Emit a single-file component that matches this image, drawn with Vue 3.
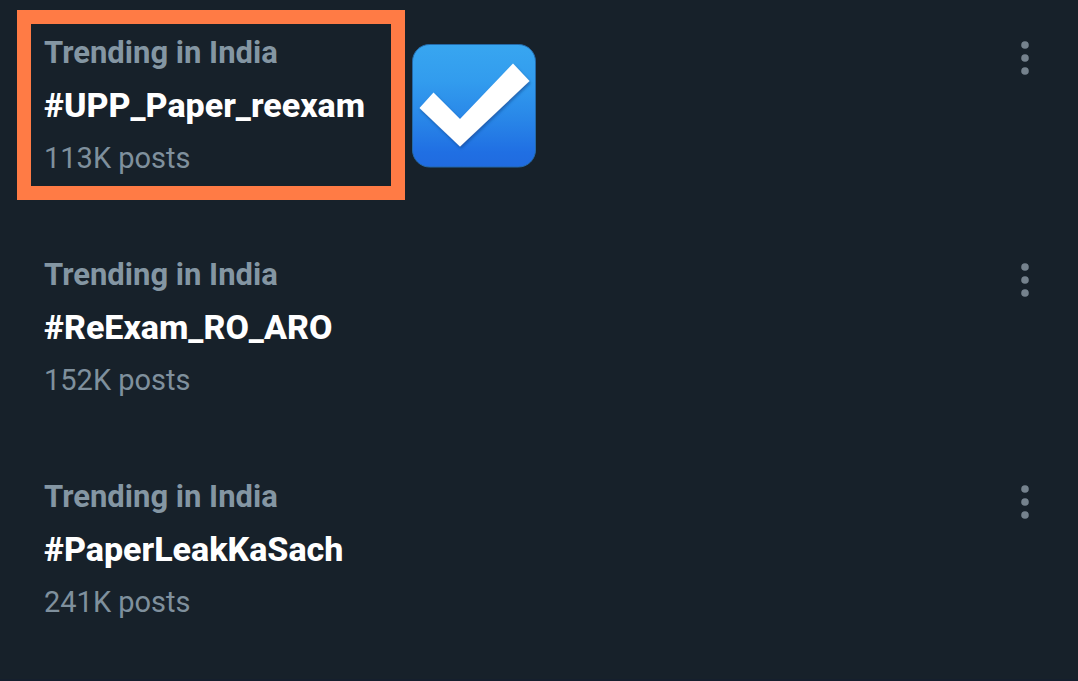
<script setup>
const trends = [
  { tag: '#UPP_Paper_reexam', posts: '113K posts', marked: true },
  { tag: '#ReExam_RO_ARO', posts: '152K posts', marked: false },
  { tag: '#PaperLeakKaSach', posts: '241K posts', marked: false },
]
</script>

<template>
  <main class="page">
    <ul class="trends">
      <li v-for="trend in trends" :key="trend.tag" class="trend">
        <div class="info">
          <span class="context">Trending in India</span>
          <a class="tag" href="#">{{ trend.tag }}</a>
          <span class="posts">{{ trend.posts }}</span>
        </div>
        <button class="more" type="button" :aria-label="'More options for ' + trend.tag">
          <svg width="10" height="34" viewBox="0 0 10 34" fill="#75828d" aria-hidden="true">
            <circle cx="5" cy="4" r="3.8" />
            <circle cx="5" cy="17" r="3.8" />
            <circle cx="5" cy="30" r="3.8" />
          </svg>
        </button>
        <div v-if="trend.marked" class="frame"></div>
        <svg v-if="trend.marked" class="check" viewBox="0 0 124 124" role="img" aria-label="Checked">
          <defs>
            <linearGradient id="tile" x1="0" y1="0" x2="0" y2="1">
              <stop offset="0" stop-color="#38a6f0" />
              <stop offset="0.3" stop-color="#329cee" />
              <stop offset="0.6" stop-color="#2987e8" />
              <stop offset="0.88" stop-color="#206fe3" />
              <stop offset="1" stop-color="#206be0" />
            </linearGradient>
            <filter id="shade" x="-10%" y="-10%" width="120%" height="130%">
              <feDropShadow dx="1" dy="2" stdDeviation="1.5" flood-color="#0c3f86" flood-opacity="0.6" />
            </filter>
          </defs>
          <rect x="0.5" y="0.5" width="123" height="122.5" rx="17" fill="url(#tile)" stroke="#2469a8" />
          <path
            d="M7.5 64 L21.5 48.5 L48 75 L101 19.5 L117.5 37 L48 102.5 Z"
            fill="#fff"
            filter="url(#shade)"
          />
        </svg>
      </li>
    </ul>
  </main>
</template>

<style>
body {
  margin: 0;
  background: #17212a;
}
</style>

<style scoped>
.page {
  box-sizing: border-box;
  min-height: 100vh;
  background: #17212a;
  border-bottom: 2px solid #151f2d;
  font-family: Roboto, "Liberation Sans", sans-serif;
}

.trends {
  margin: 0;
  padding: 0;
  list-style: none;
}

.trend {
  position: relative;
  display: flex;
  justify-content: space-between;
  align-items: flex-start;
  padding: 26px 48px 37px 44px;
}

.trend:last-child {
  padding-bottom: 12px;
}

.info {
  display: flex;
  flex-direction: column;
  align-items: flex-start;
  line-height: 53px;
  white-space: nowrap;
}

.context {
  color: #8496a3;
  font-size: 31px;
  font-weight: 700;
}

.tag {
  color: #fff;
  font-size: 34px;
  font-weight: 800;
  text-decoration: none;
}

.posts {
  color: #7f909d;
  font-size: 29px;
}

.more {
  display: flex;
  margin: 15px 0 0;
  padding: 0;
  border: 0;
  background: none;
  cursor: pointer;
}

.frame {
  position: absolute;
  top: 10px;
  left: 17px;
  box-sizing: border-box;
  width: 388px;
  height: 190px;
  border: 14px solid #ff7b45;
  pointer-events: none;
}

.check {
  position: absolute;
  top: 44px;
  left: 412px;
  width: 124px;
  height: 124px;
}
</style>
